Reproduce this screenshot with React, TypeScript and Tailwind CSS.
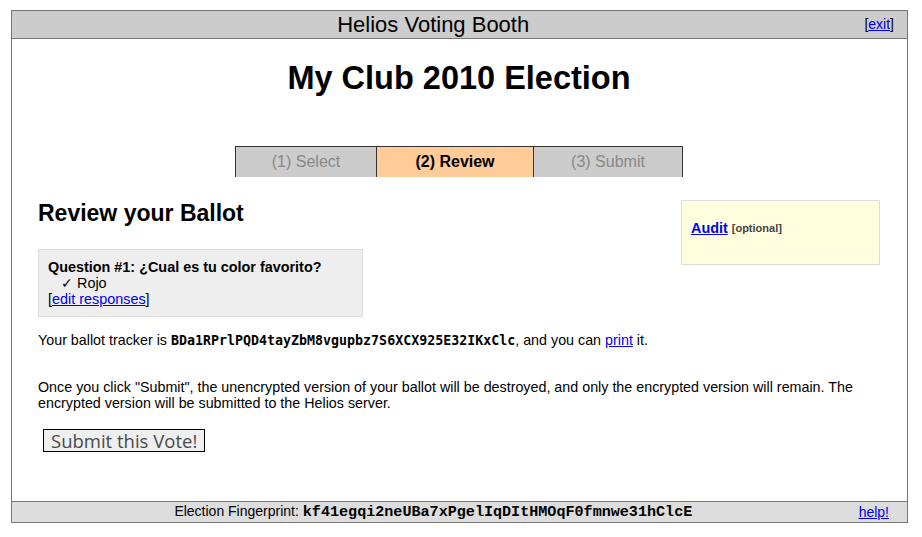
export default function App() {
    return (
        <div className="pt-[10px] pl-[11px] bg-white min-h-[537px]" style={{ fontFamily: '"Liberation Sans", Arial, sans-serif' }}>
            <div className="w-[897px] border border-[#777] text-black">
                <div className="flex items-center h-[28px] bg-[#cccccc] border-b border-[#777]">
                    <div className="flex-1 text-center text-[22px] leading-[26px] pr-[10px]">Helios Voting Booth</div>
                    <div className="text-[14px] pr-[13px]">
                        [<a href="#" className="text-[#0000ee] underline">exit</a>]
                    </div>
                </div>

                <div className="h-[462px] pl-[26px] pr-[27px] pt-[21px]">
                    <h1 className="text-center font-bold text-[32.5px] leading-[36px]">My Club 2010 Election</h1>

                    <div className="flex justify-center mt-[50px] text-[16px]">
                        <div className="flex border-t border-l border-[#333]">
                            <div className="w-[141px] h-[30px] flex items-center justify-center bg-[#cccccc] text-[#888] border-r border-[#333]">(1) Select</div>
                            <div className="w-[157px] h-[30px] flex items-center justify-center bg-[#ffcc99] font-bold border-r border-[#333]">(2) Review</div>
                            <div className="w-[149px] h-[30px] flex items-center justify-center bg-[#cccccc] text-[#888] border-r border-[#333]">(3) Submit</div>
                        </div>
                    </div>

                    <div className="flex justify-between items-start mt-[22px]">
                        <div>
                            <h2 className="font-bold text-[23px] leading-[26px] mt-[1px]">Review your Ballot</h2>
                            <div className="mt-[23px] w-[325px] bg-[#eeeeee] border border-[#dddddd] px-[9px] pt-[9px] pb-[9px] text-[14.4px] leading-[16px]">
                                <div className="font-bold">Question #1: ¿Cual es tu color favorito?</div>
                                <div className="pl-[13px]">✓ Rojo</div>
                                <div>
                                    [<a href="#" className="text-[#0000ee] underline">edit responses</a>]
                                </div>
                            </div>
                        </div>
                        <div className="w-[199px] h-[65px] bg-[#ffffe0] border border-[#dddddd] flex items-start px-[9px] pt-[19px] mt-[1px]">
                            <a href="#" className="text-[#0000ee] underline font-bold text-[14.4px] leading-[16px]">Audit</a>
                            <span className="ml-[4px] text-[11px] leading-[16px] font-bold text-[#444]">[optional]</span>
                        </div>
                    </div>

                    <p className="mt-[15px] text-[14.3px] leading-[16px]">
                        Your ballot tracker is{" "}
                        <span className="font-bold text-[13.3px]" style={{ fontFamily: '"DejaVu Sans Mono", monospace' }}>BDa1RPrlPQD4tayZbM8vgupbz7S6XCX925E32IKxClc</span>
                        , and you can <a href="#" className="text-[#0000ee] underline">print</a> it.
                    </p>

                    <p className="mt-[30px] text-[14.3px] leading-[16px]">
                        Once you click "Submit", the unencrypted version of your ballot will be destroyed, and only the encrypted version will remain. The encrypted version will be submitted to the Helios server.
                    </p>

                    <button className="mt-[18px] ml-[5px] h-[23px] px-[7px] bg-[#efefef] border border-black text-[#4a4a4a] text-[18.5px] leading-[20px]" style={{ fontFamily: '"Open Sans", "DejaVu Sans", sans-serif' }}>
                        Submit this Vote!
                    </button>
                </div>

                <div className="flex items-center h-[21px] bg-[#dddddd] border-t border-[#777] text-[14px]">
                    <div className="flex-1 text-center pr-[4px]">
                        Election Fingerprint:{" "}
                        <span className="font-bold text-[15.1px]" style={{ fontFamily: '"Liberation Mono", monospace' }}>kf41egqi2neUBa7xPgelIqDItHMOqF0fmnwe31hClcE</span>
                    </div>
                    <a href="#" className="text-[#0000ee] underline pr-[18px]">help!</a>
                </div>
            </div>
        </div>
    )
}
